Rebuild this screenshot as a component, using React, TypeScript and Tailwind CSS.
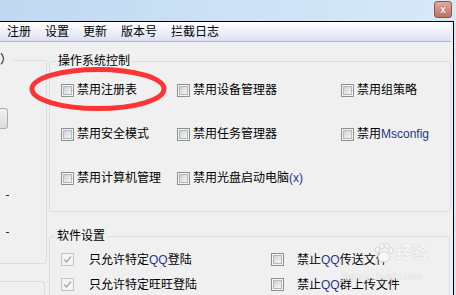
import clsx from 'clsx'

const font = "font-['Liberation_Sans','Noto_Sans_CJK_SC',sans-serif]"

const CheckBox = ({ checked = false, disabled = false }: { checked?: boolean; disabled?: boolean }) => {
  if (disabled) {
    return (
      <span className="w-[13px] h-[13px] shrink-0 border border-[#c4c4c4] bg-[#f4f4f4] flex items-center justify-center">
        {checked && (
          <svg width="9" height="9" viewBox="0 0 9 9">
            <path d="M1 4.5 L3.5 7 L8 1.5" fill="none" stroke="#a9a9a9" strokeWidth="1.4" />
          </svg>
        )}
      </span>
    )
  }
  return (
    <span className="w-[13px] h-[13px] shrink-0 border border-[#8e8f8f] bg-[#f4f4f4] p-[1px]">
      <span className="block w-full h-full border border-[#b4b6b9] bg-gradient-to-br from-[#cfd1d4] to-[#f7f7f7]" />
    </span>
  )
}

const Item = ({ label, gap = 'gap-[3px]', checked, disabled }: { label: React.ReactNode; gap?: string; checked?: boolean; disabled?: boolean }) => (
  <div className={clsx('flex items-center', gap)}>
    <CheckBox checked={checked} disabled={disabled} />
    <span className="text-[12px] leading-[14px] text-black whitespace-nowrap">{label}</span>
  </div>
)

const Latin = ({ children }: { children: React.ReactNode }) => <span className="text-[#1d3486]">{children}</span>

const menu = ['注册', '设置', '更新', '版本号', '拦截日志']

export default function App() {
  return (
    <div className={clsx('relative w-[456px] h-[295px] overflow-hidden bg-gradient-to-r from-[#c0d9f1] to-[#d8e9f8]', font)}>
      {/* title bar */}
      <div className="h-[21px] flex justify-end items-start pt-[1px] pr-[4px]">
        <div className="w-[18px] h-[17px] rounded-[3px] border border-[#8a5550] bg-gradient-to-b from-[#e3aaa2] to-[#c46f64] flex items-center justify-center">
          <span className="text-[10px] leading-none font-bold text-white [text-shadow:0_0_1px_#6b3a35]">x</span>
        </div>
      </div>

      {/* window */}
      <div className="w-[454px] h-[274px] border-t border-r border-black bg-[#f0f0f0] flex flex-col">
        <div className="h-[20px] shrink-0 border-b border-[#b3b8cb] bg-gradient-to-b from-[#ffffff] to-[#dde1f2] mr-[2px] flex items-center gap-[14px] pl-[7px]">
          {menu.map((m) => (
            <span key={m} className="text-[12px] leading-[14px] text-black">
              {m}
            </span>
          ))}
        </div>

        <div className="flex-1 flex">
          {/* left column */}
          <div className="w-[49px] overflow-hidden pt-[11px]">
            <fieldset className="-ml-[30px] w-[77px] h-[211px] border border-[#d5dfe5] rounded-[3px]">
              <legend className="ml-[28px] px-[1px] text-[12px] leading-[14px] text-black">）</legend>
              <div className="mt-[41px] w-[37px] h-[21px] border border-[#acacac] rounded-[3px] bg-gradient-to-b from-[#f2f2f2] to-[#dcdcdc]" />
              <div className="mt-[66px] ml-[35px] w-[3px] h-[1px] bg-[#1b2b6e]" />
              <div className="mt-[36px] ml-[35px] w-[3px] h-[1px] bg-[#1b2b6e]" />
            </fieldset>
            <div className="mt-[17px] -ml-[30px] w-[75px] h-[30px] border-t border-r border-[#d5dfe5] rounded-tr-[3px]" />
          </div>

          {/* right column */}
          <div className="w-[402px] pt-[12px]">
            <fieldset className="w-full h-[158px] border border-[#d5dfe5] rounded-[3px]">
              <legend className="ml-[6px] px-[2px] text-[12px] leading-[14px] text-black">操作系统控制</legend>
              <div className="grid grid-cols-[116px_164px_1fr] auto-rows-[44px] items-center pl-[11px]">
                <Item label="禁用注册表" />
                <Item label="禁用设备管理器" />
                <Item label="禁用组策略" />
                <Item label="禁用安全模式" />
                <Item label="禁用任务管理器" />
                <Item label={<>禁用<Latin>Msconfig</Latin></>} />
                <Item label="禁用计算机管理" />
                <Item label={<>禁用光盘启动电脑<Latin>(x)</Latin></>} />
              </div>
            </fieldset>

            <fieldset className="mt-[17px] w-[401px] h-[80px] border border-[#d5dfe5] rounded-[3px]">
              <legend className="ml-[5px] px-[2px] text-[12px] leading-[14px] text-black">软件设置</legend>
              <div className="grid grid-cols-[210px_1fr] auto-rows-[25px] items-center pl-[11px] pt-[4px]">
                <Item gap="gap-[15px]" checked disabled label={<>只允许特定<Latin>QQ</Latin>登陆</>} />
                <Item gap="gap-[13px]" label={<>禁止<Latin>QQ</Latin>传送文件</>} />
                <Item gap="gap-[15px]" checked disabled label="只允许特定旺旺登陆" />
                <Item gap="gap-[13px]" label={<>禁止<Latin>QQ</Latin>群上传文件</>} />
              </div>
            </fieldset>
          </div>
        </div>
      </div>

      {/* annotation ellipse */}
      <svg className="absolute left-0 top-0 pointer-events-none" width="456" height="295">
        <ellipse cx="98" cy="89" rx="66" ry="19.5" fill="none" stroke="#ff3535" strokeWidth="5" />
      </svg>

      {/* watermark */}
      <div className="absolute left-[374px] top-[242px] flex items-center gap-[2px] pointer-events-none">
        <svg width="20" height="22" viewBox="0 0 20 22">
          <ellipse cx="10" cy="15" rx="6" ry="5" fill="#f7f7f7" stroke="#cfcfcf" strokeWidth="0.8" />
          <ellipse cx="3.5" cy="8" rx="2.2" ry="2.8" fill="#f7f7f7" stroke="#cfcfcf" strokeWidth="0.8" />
          <ellipse cx="8" cy="4" rx="2.2" ry="2.8" fill="#f7f7f7" stroke="#cfcfcf" strokeWidth="0.8" />
          <ellipse cx="13" cy="4" rx="2.2" ry="2.8" fill="#f7f7f7" stroke="#cfcfcf" strokeWidth="0.8" />
          <ellipse cx="17" cy="8.5" rx="2.2" ry="2.8" fill="#f7f7f7" stroke="#cfcfcf" strokeWidth="0.8" />
        </svg>
        <span className="text-[16px] leading-[18px] font-bold text-[#f7f7f7] [text-shadow:0_0_1px_#b5b5b5]">经验</span>
      </div>
      <span className="absolute left-[342px] top-[272px] text-[10px] leading-[10px] text-[#f5f5f5] [text-shadow:0_0_1px_#c2c2c2] pointer-events-none">
        jingyan.baidu.com
      </span>
    </div>
  )
}
